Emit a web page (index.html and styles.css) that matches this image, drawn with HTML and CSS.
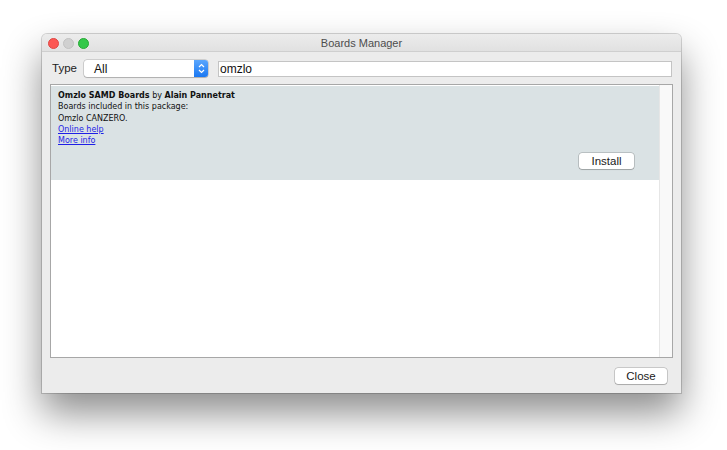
FILE: index.html
```html
<!DOCTYPE html>
<html>
<head>
<meta charset="utf-8">
<link rel="stylesheet" href="styles.css">
</head>
<body>
<div class="window">
  <div class="titlebar">
    <div class="lights">
      <span class="light red"></span>
      <span class="light gray"></span>
      <span class="light green"></span>
    </div>
    <div class="title">Boards Manager</div>
  </div>
  <div class="toolbar">
    <span class="type-label">Type</span>
    <div class="select">
      <span class="select-value">All</span>
      <span class="stepper">
        <svg width="7" height="11" viewBox="0 0 7 11"><path d="M1 4 L3.5 1.5 L6 4 M1 7 L3.5 9.5 L6 7" fill="none" stroke="#fff" stroke-width="1.2"/></svg>
      </span>
    </div>
    <div class="search">omzlo</div>
  </div>
  <div class="list">
    <div class="list-content">
      <div class="item">
        <div class="line"><b>Omzlo SAMD Boards</b> by <b>Alain Pannetrat</b></div>
        <div class="line">Boards included in this package:</div>
        <div class="line">Omzlo CANZERO.</div>
        <div class="line"><a href="#">Online help</a></div>
        <div class="line"><a href="#">More info</a></div>
        <div class="item-actions"><button class="btn install">Install</button></div>
      </div>
    </div>
    <div class="scrollbar"></div>
  </div>
  <div class="footer">
    <button class="btn close">Close</button>
  </div>
</div>
</body>
</html>
```
FILE: styles.css
```css
html, body {
  margin: 0;
  padding: 0;
  background: #ffffff;
}
body {
  width: 727px;
  height: 450px;
  overflow: hidden;
  font-family: "Liberation Sans", Arial, sans-serif;
}
.window {
  margin: 34px 0 0 42px;
  width: 639px;
  height: 359px;
  background: #ececec;
  border-radius: 5px 5px 0 0;
  box-shadow: 0 20px 38px rgba(0, 0, 0, 0.45), 0 0 0 1px rgba(0, 0, 0, 0.16);
  display: flex;
  flex-direction: column;
  box-sizing: border-box;
}
.titlebar {
  height: 17px;
  border-bottom: 1px solid #cfcfcf;
  background: linear-gradient(#ececec, #e1e1e1);
  border-radius: 5px 5px 0 0;
  display: flex;
  align-items: center;
  position: relative;
  flex: none;
}
.lights {
  display: flex;
  gap: 4px;
  padding-left: 6px;
  padding-top: 1px;
}
.light {
  width: 11px;
  height: 11px;
  border-radius: 50%;
  box-sizing: border-box;
}
.light.red { background: #fc5753; border: 1px solid #df4744; }
.light.gray { background: #d0d0d0; border: 1px solid #c2c2c2; }
.light.green { background: #34c84a; border: 1px solid #27aa35; }
.title {
  position: absolute;
  left: 0;
  right: 0;
  top: 3px;
  text-align: center;
  font-size: 11px;
  color: #4d4d4d;
}
.toolbar {
  display: flex;
  align-items: center;
  height: 32px;
  padding: 0 9px 0 10px;
  flex: none;
}
.type-label {
  font-size: 11.5px;
  color: #222;
  width: 32px;
}
.select {
  width: 124px;
  height: 17px;
  background: #fff;
  border-radius: 3px;
  box-shadow: 0 0 0 0.5px rgba(0, 0, 0, 0.25), 0 1px 1px rgba(0, 0, 0, 0.15);
  display: flex;
  align-items: center;
  justify-content: space-between;
  margin-top: 1px;
}
.select-value {
  font-size: 12px;
  color: #111;
  padding-left: 10px;
}
.stepper {
  width: 14px;
  height: 17px;
  background: linear-gradient(#5aa6fd, #1a78f2);
  border-radius: 0 3px 3px 0;
  display: flex;
  align-items: center;
  justify-content: center;
}
.search {
  margin-left: 10px;
  flex: 1;
  height: 16px;
  box-sizing: border-box;
  border: 1px solid #c4c4c4;
  background: #fff;
  font-size: 12px;
  line-height: 14px;
  padding-left: 1px;
  color: #111;
  margin-top: 1px;
}
.list {
  margin: 0 8px;
  height: 274px;
  box-sizing: border-box;
  border: 1px solid #a7a7a7;
  background: #fff;
  display: flex;
  flex: none;
}
.list-content {
  flex: 1;
  padding-top: 1px;
}
.item {
  background: #dae2e4;
  padding: 4px 0 0 7px;
  height: 94px;
  box-sizing: border-box;
  font-family: "DejaVu Sans", Verdana, sans-serif;
  font-size: 8px;
  color: #111;
}
.line {
  line-height: 11.25px;
  height: 11.25px;
  white-space: nowrap;
}
.line b { font-weight: bold; }
.line a { color: #1f1fe6; text-decoration: underline; }
.item-actions {
  display: flex;
  justify-content: flex-end;
  padding-right: 25px;
  margin-top: 7px;
}
.scrollbar {
  width: 12px;
  background: #f9f9f9;
  border-left: 1px solid #e6e6e6;
}
.btn {
  font-family: "Liberation Sans", Arial, sans-serif;
  font-size: 11.5px;
  color: #1a1a1a;
  background: #fff;
  border: none;
  border-radius: 3px;
  box-shadow: 0 0 0 0.5px rgba(0, 0, 0, 0.3), 0 1px 1px rgba(0, 0, 0, 0.15);
  height: 16px;
  padding: 0;
  line-height: 16px;
}
.install { width: 55px; }
.footer {
  flex: 1;
  display: flex;
  justify-content: flex-end;
  align-items: flex-start;
  padding: 10px 14px 0 0;
}
.close { width: 52px; }
```
